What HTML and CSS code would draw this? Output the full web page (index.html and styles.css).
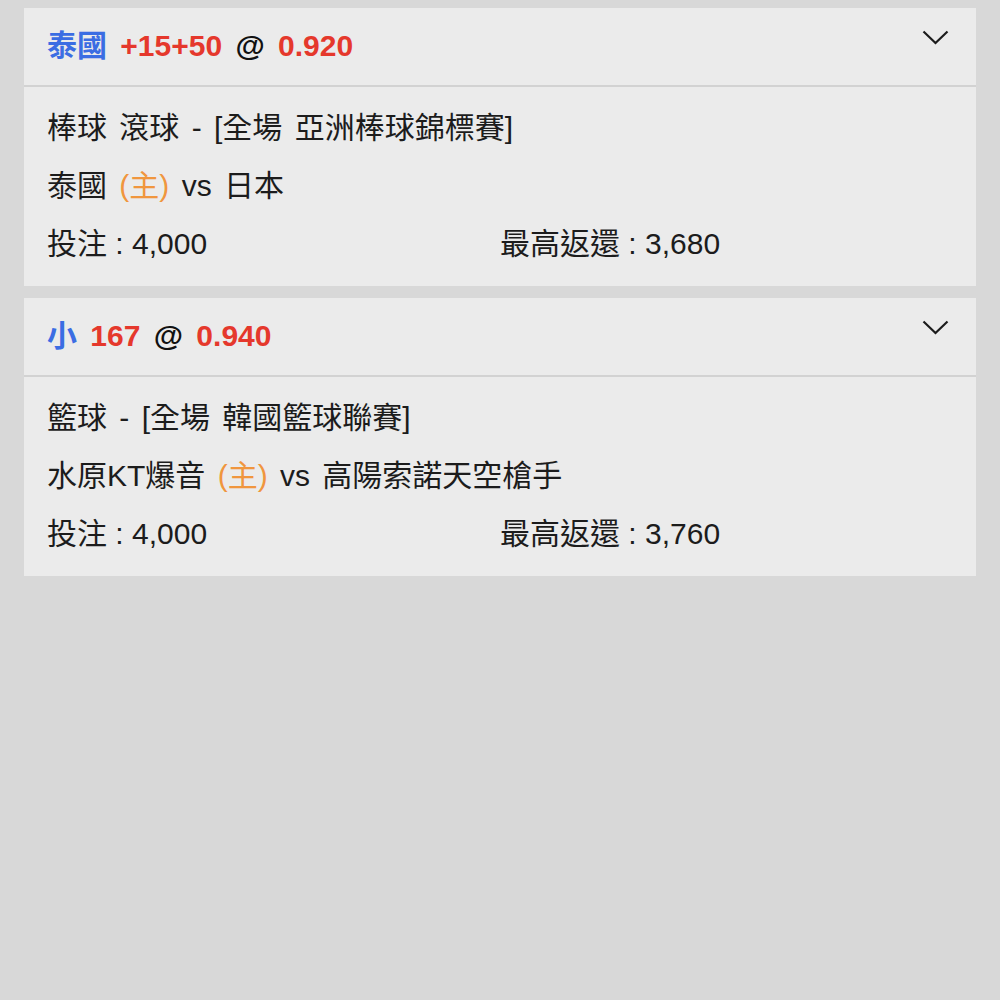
FILE: index.html
```html
<!DOCTYPE html>
<html lang="zh-Hant">
<head>
<meta charset="utf-8">
<title>注單</title>
<link rel="stylesheet" href="styles.css">
</head>
<body>
<div class="list">
  <section class="card">
    <div class="card-head">
      <div class="title"><span class="pick">泰國</span> <span class="line">+15+50</span> <span class="at">@</span> <span class="odds">0.920</span></div>
      <svg class="chev" width="27" height="15" viewBox="0 0 27 15"><path d="M1.5 1.5 L13.5 13 L25.5 1.5" fill="none" stroke="#1c1c1c" stroke-width="2.2" stroke-linejoin="miter"/></svg>
    </div>
    <div class="card-body">
      <div class="row spaced">棒球 滾球 - [全場 亞洲棒球錦標賽]</div>
      <div class="row spaced">泰國 <span class="home">(主)</span> vs 日本</div>
      <div class="row split"><span>投注 : 4,000</span><span>最高返還 : 3,680</span></div>
    </div>
  </section>
  <section class="card">
    <div class="card-head">
      <div class="title"><span class="pick">小</span> <span class="line">167</span> <span class="at">@</span> <span class="odds">0.940</span></div>
      <svg class="chev" width="27" height="15" viewBox="0 0 27 15"><path d="M1.5 1.5 L13.5 13 L25.5 1.5" fill="none" stroke="#1c1c1c" stroke-width="2.2" stroke-linejoin="miter"/></svg>
    </div>
    <div class="card-body">
      <div class="row spaced">籃球 - [全場 韓國籃球聯賽]</div>
      <div class="row spaced">水原KT爆音 <span class="home">(主)</span> vs 高陽索諾天空槍手</div>
      <div class="row split"><span>投注 : 4,000</span><span>最高返還 : 3,760</span></div>
    </div>
  </section>
</div>
</body>
</html>
```
FILE: styles.css
```css
html, body {
  margin: 0;
  padding: 0;
  background: #d8d8d8;
  height: 100%;
}
body {
  font-family: "Liberation Sans", "Noto Sans CJK TC", sans-serif;
  color: #1c1c1c;
  font-size: 30px;
}
.list {
  padding: 8px 24px 0 24px;
  display: flex;
  flex-direction: column;
  gap: 12px;
}
.card {
  background: #ebebeb;
}
.card-head {
  height: 77px;
  display: flex;
  align-items: center;
  justify-content: space-between;
  padding: 0 27px 0 23px;
  border-bottom: 2px solid #d2d2d2;
}
.title {
  font-weight: bold;
  line-height: 40px;
  white-space: pre;
  word-spacing: 5px;
  margin-top: -2px;
}
.pick { color: #3b6de3; }
.line, .odds { color: #e5382c; }
.at { color: #111; }
.chev {
  align-self: flex-start;
  margin-top: 22px;
}
.card-body {
  padding: 12px 23px 13px 23px;
}
.row {
  height: 58px;
  line-height: 58px;
  white-space: nowrap;
}
.spaced { word-spacing: 4px; }
.home { color: #f0963e; }
.split {
  display: grid;
  grid-template-columns: 1fr 1fr;
}
```
